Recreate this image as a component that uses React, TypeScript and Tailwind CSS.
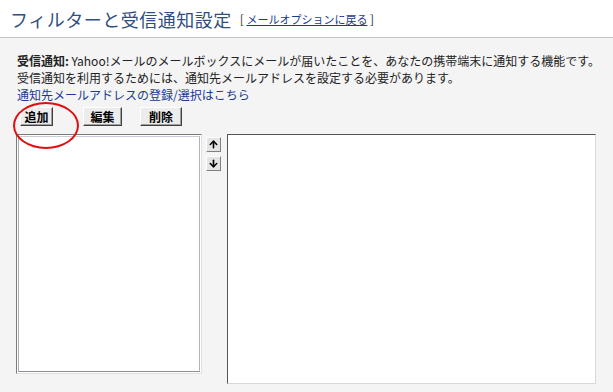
import { ArrowUp, ArrowDown } from "lucide-react";

const jp = "font-['MS_UI_Gothic','Noto_Sans_CJK_JP',sans-serif]";

function ArrowButton({ dir }: { dir: "up" | "down" }) {
  return (
    <button
      type="button"
      className="flex h-[15px] w-[15px] items-center justify-center border border-t-white border-l-white border-r-[#808080] border-b-[#808080] bg-[#e4e4e4]"
      aria-label={dir === "up" ? "上へ" : "下へ"}
    >
      {dir === "up" ? (
        <ArrowUp size={11} strokeWidth={3.5} className="text-black" />
      ) : (
        <ArrowDown size={11} strokeWidth={3.5} className="text-black" />
      )}
    </button>
  );
}

function ToolButton({ label, className }: { label: string; className?: string }) {
  return (
    <button
      type="button"
      className={`h-[19px] border border-t-white border-l-white border-r-[#404040] border-b-[#404040] bg-[#ececec] text-[12px] font-bold leading-none text-black shadow-[inset_-1px_-1px_0_#a0a0a0] ${className ?? ""}`}
    >
      {label}
    </button>
  );
}

export default function App() {
  return (
    <div className={`relative min-h-[392px] w-[613px] bg-[#f4f4f4] ${jp}`}>
      {/* Header */}
      <div className="flex h-[38px] items-center border-b border-[#c4c4c4] bg-white pl-[10px]">
        <h1 className="text-[18px] font-normal leading-none tracking-[0.5px] text-[#2f4f82]">
          フィルターと受信通知設定
        </h1>
        <span className="ml-[8px] text-[12px] text-[#333]">
          [{" "}
          <a href="#" className="text-[11px] text-[#1a3a8a] underline">
            メールオプションに戻る
          </a>{" "}
          ]
        </span>
      </div>

      {/* Description */}
      <div className="pl-[17px] pt-[14px] text-[12px] leading-[17px] text-[#222]">
        <p>
          <b>受信通知:</b> Yahoo!メールのメールボックスにメールが届いたことを、あなたの携帯端末に通知する機能です。
        </p>
        <p>受信通知を利用するためには、通知先メールアドレスを設定する必要があります。</p>
        <a href="#" className="block text-[#1a3a8f]">
          通知先メールアドレスの登録/選択はこちら
        </a>
      </div>

      {/* Buttons */}
      <div className="mt-[4px] flex pl-[20px]">
        <ToolButton label="追加" className="w-[33px]" />
        <ToolButton label="編集" className="ml-[30px] w-[39px]" />
        <ToolButton label="削除" className="ml-[18px] w-[42px]" />
      </div>

      {/* Lists */}
      <div className="mt-[8px] flex items-start pl-[16px]">
        <div className="h-[240px] w-[186px] border border-t-[#7b7b7b] border-l-[#7b7b7b] border-r-[#e0e0e0] border-b-[#e0e0e0] bg-white p-px">
          <div className="h-full w-full border border-t-[#c8ccd4] border-l-[#a8acb4] border-r-[#b0b4bc] border-b-[#8a8e96]" />
        </div>
        <div className="ml-[4px] mt-[3px] flex flex-col gap-[4px]">
          <ArrowButton dir="up" />
          <ArrowButton dir="down" />
        </div>
        <div className="ml-[6px] h-[250px] w-[369px] border border-t-[#555] border-l-[#555] border-r-[#d8d8d8] border-b-[#d8d8d8] bg-white" />
      </div>

      {/* Red circle annotation */}
      <div className="pointer-events-none absolute left-[13px] top-[102px] h-[47px] w-[66px] rounded-[50%] border-2 border-[#e01010]" />
    </div>
  );
}
